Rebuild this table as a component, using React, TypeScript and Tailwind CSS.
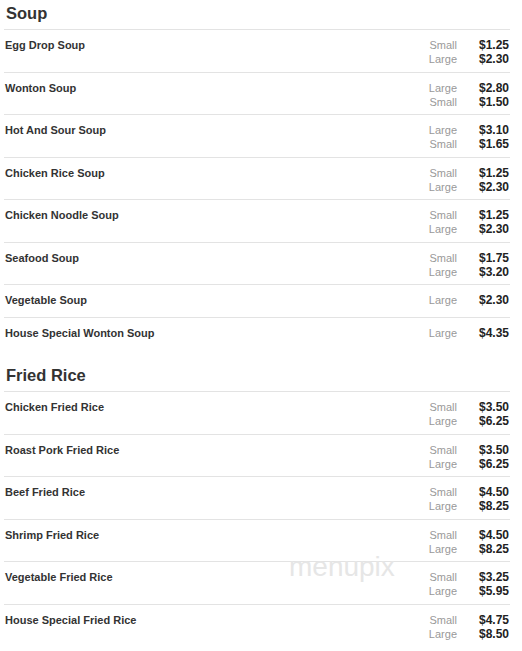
type Item = { name: string; sizes: [string, string][] };

// menu data in the same order as the printed card
const sections: { title: string; items: Item[] }[] = [
  {
    title: "Soup",
    items: [
      { name: "Egg Drop Soup", sizes: [["Small", "$1.25"], ["Large", "$2.30"]] },
      { name: "Wonton Soup", sizes: [["Large", "$2.80"], ["Small", "$1.50"]] },
      { name: "Hot And Sour Soup", sizes: [["Large", "$3.10"], ["Small", "$1.65"]] },
      { name: "Chicken Rice Soup", sizes: [["Small", "$1.25"], ["Large", "$2.30"]] },
      { name: "Chicken Noodle Soup", sizes: [["Small", "$1.25"], ["Large", "$2.30"]] },
      { name: "Seafood Soup", sizes: [["Small", "$1.75"], ["Large", "$3.20"]] },
      { name: "Vegetable Soup", sizes: [["Large", "$2.30"]] },
      { name: "House Special Wonton Soup", sizes: [["Large", "$4.35"]] },
    ],
  },
  {
    title: "Fried Rice",
    items: [
      { name: "Chicken Fried Rice", sizes: [["Small", "$3.50"], ["Large", "$6.25"]] },
      { name: "Roast Pork Fried Rice", sizes: [["Small", "$3.50"], ["Large", "$6.25"]] },
      { name: "Beef Fried Rice", sizes: [["Small", "$4.50"], ["Large", "$8.25"]] },
      { name: "Shrimp Fried Rice", sizes: [["Small", "$4.50"], ["Large", "$8.25"]] },
      { name: "Vegetable Fried Rice", sizes: [["Small", "$3.25"], ["Large", "$5.95"]] },
      { name: "House Special Fried Rice", sizes: [["Small", "$4.75"], ["Large", "$8.50"]] },
    ],
  },
];

const MenuRow = ({ item }: { item: Item }) => (
  <div
    className={`flex border-t border-[#e3e3e3] pt-[8px] ${
      item.sizes.length > 1 ? "h-[42.5px]" : "h-[33px]"
    }`}
  >
    <div className="flex-1 pl-px text-[11px] leading-[14px] font-bold text-[#333]">
      {item.name}
    </div>
    <div className="w-[60px] text-right text-[11px] leading-[14px] text-[#999]">
      {item.sizes.map(([label]) => (
        <div key={label}>{label}</div>
      ))}
    </div>
    <div className="w-[53px] pr-px text-right text-[12px] leading-[14px] font-bold text-[#222]">
      {item.sizes.map(([label, price]) => (
        <div key={label}>{price}</div>
      ))}
    </div>
  </div>
);

export default function App() {
  return (
    <div className="relative w-[522px] h-[651px] overflow-hidden bg-white font-['Liberation_Sans',Arial,sans-serif]">
      <div className="ml-[4px] w-[506px]">
        {sections.map((section, i) => (
          <div key={section.title} className={i > 0 ? "mt-[12px]" : ""}>
            <h2 className="h-[29px] pl-[2px] text-[16.5px] leading-[26px] font-bold text-[#333]">
              {section.title}
            </h2>
            {section.items.map((item) => (
              <MenuRow key={item.name} item={item} />
            ))}
          </div>
        ))}
      </div>

      {/* watermark */}
      <div className="absolute left-[289px] top-[551px] text-[28px] leading-[32px] text-[#e6e6e6] pointer-events-none">
        menupix
      </div>
    </div>
  );
}
